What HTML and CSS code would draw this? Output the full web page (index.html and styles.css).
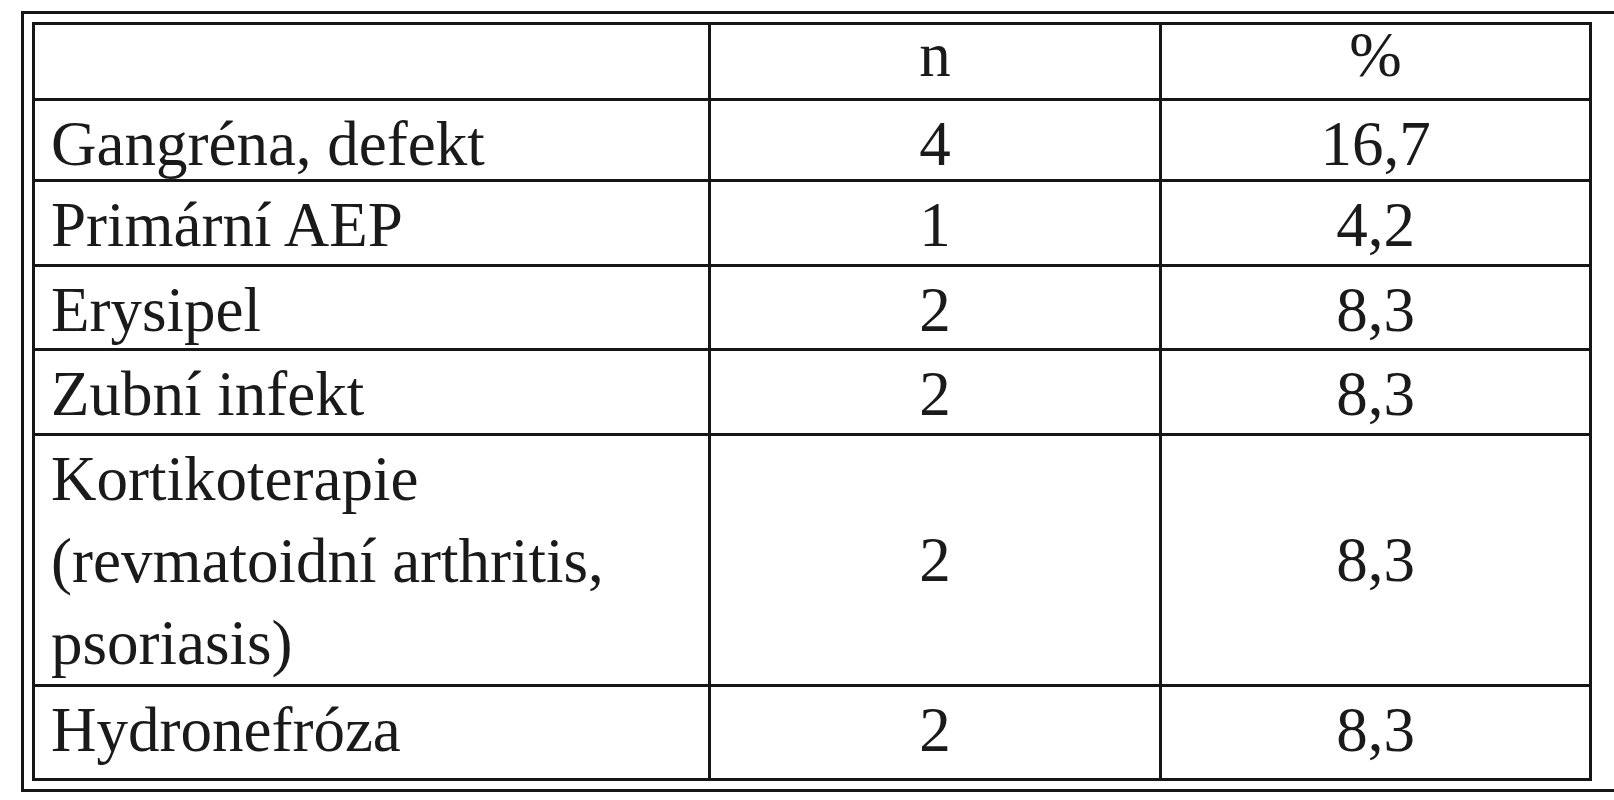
FILE: index.html
```html
<!DOCTYPE html>
<html lang="cs">
<head>
<meta charset="utf-8">
<title>Tabulka</title>
<link rel="stylesheet" href="styles.css">
</head>
<body>
<div class="frame">
  <table class="data">
    <colgroup>
      <col class="c-label">
      <col class="c-n">
      <col class="c-pct">
    </colgroup>
    <thead>
      <tr class="r-head">
        <th></th>
        <th>n</th>
        <th>%</th>
      </tr>
    </thead>
    <tbody>
      <tr class="r1"><td class="label">Gangréna, defekt</td><td>4</td><td>16,7</td></tr>
      <tr class="r2"><td class="label">Primární AEP</td><td>1</td><td>4,2</td></tr>
      <tr class="r3"><td class="label">Erysipel</td><td>2</td><td>8,3</td></tr>
      <tr class="r4"><td class="label">Zubní infekt</td><td>2</td><td>8,3</td></tr>
      <tr class="r5"><td class="label multi">Kortikoterapie<br>(revmatoidní arthritis,<br>psoriasis)</td><td class="mid">2</td><td class="mid">8,3</td></tr>
      <tr class="r6"><td class="label">Hydronefróza</td><td>2</td><td>8,3</td></tr>
    </tbody>
  </table>
</div>
</body>
</html>
```

FILE: styles.css
```css
html, body {
  margin: 0;
  padding: 0;
  background: #ffffff;
}

body {
  font-family: "Liberation Serif", "Times New Roman", serif;
  color: #1a1a1a;
}

.frame {
  margin: 11px 0 0 21px;
  width: 1576px;
  border: 3px solid #161616;
  padding: 8px;
}

.data {
  width: 1560px;
  border-collapse: collapse;
  table-layout: fixed;
  border: 3px solid #161616;
  font-size: 63px;
}

.c-label { width: 676px; }
.c-n { width: 451px; }
.c-pct { width: 430px; }

.data th,
.data td {
  border: 3px solid #161616;
  padding: 8px 0 0 0;
  text-align: center;
  vertical-align: top;
  line-height: 70px;
  font-weight: normal;
  white-space: nowrap;
}

.data th {
  line-height: 61px;
  padding-top: 0;
}

.data td.label {
  text-align: left;
  padding-left: 16px;
}

.data td.multi {
  line-height: 82px;
  padding-top: 2px;
}

.data td.mid {
  vertical-align: middle;
  padding-top: 0;
}

.r-head { height: 76px; }
.r1 { height: 81px; }
.r2 { height: 85px; }
.r3 { height: 84px; }
.r4 { height: 85px; }
.r5 { height: 251px; }
.r6 { height: 94px; }
```
